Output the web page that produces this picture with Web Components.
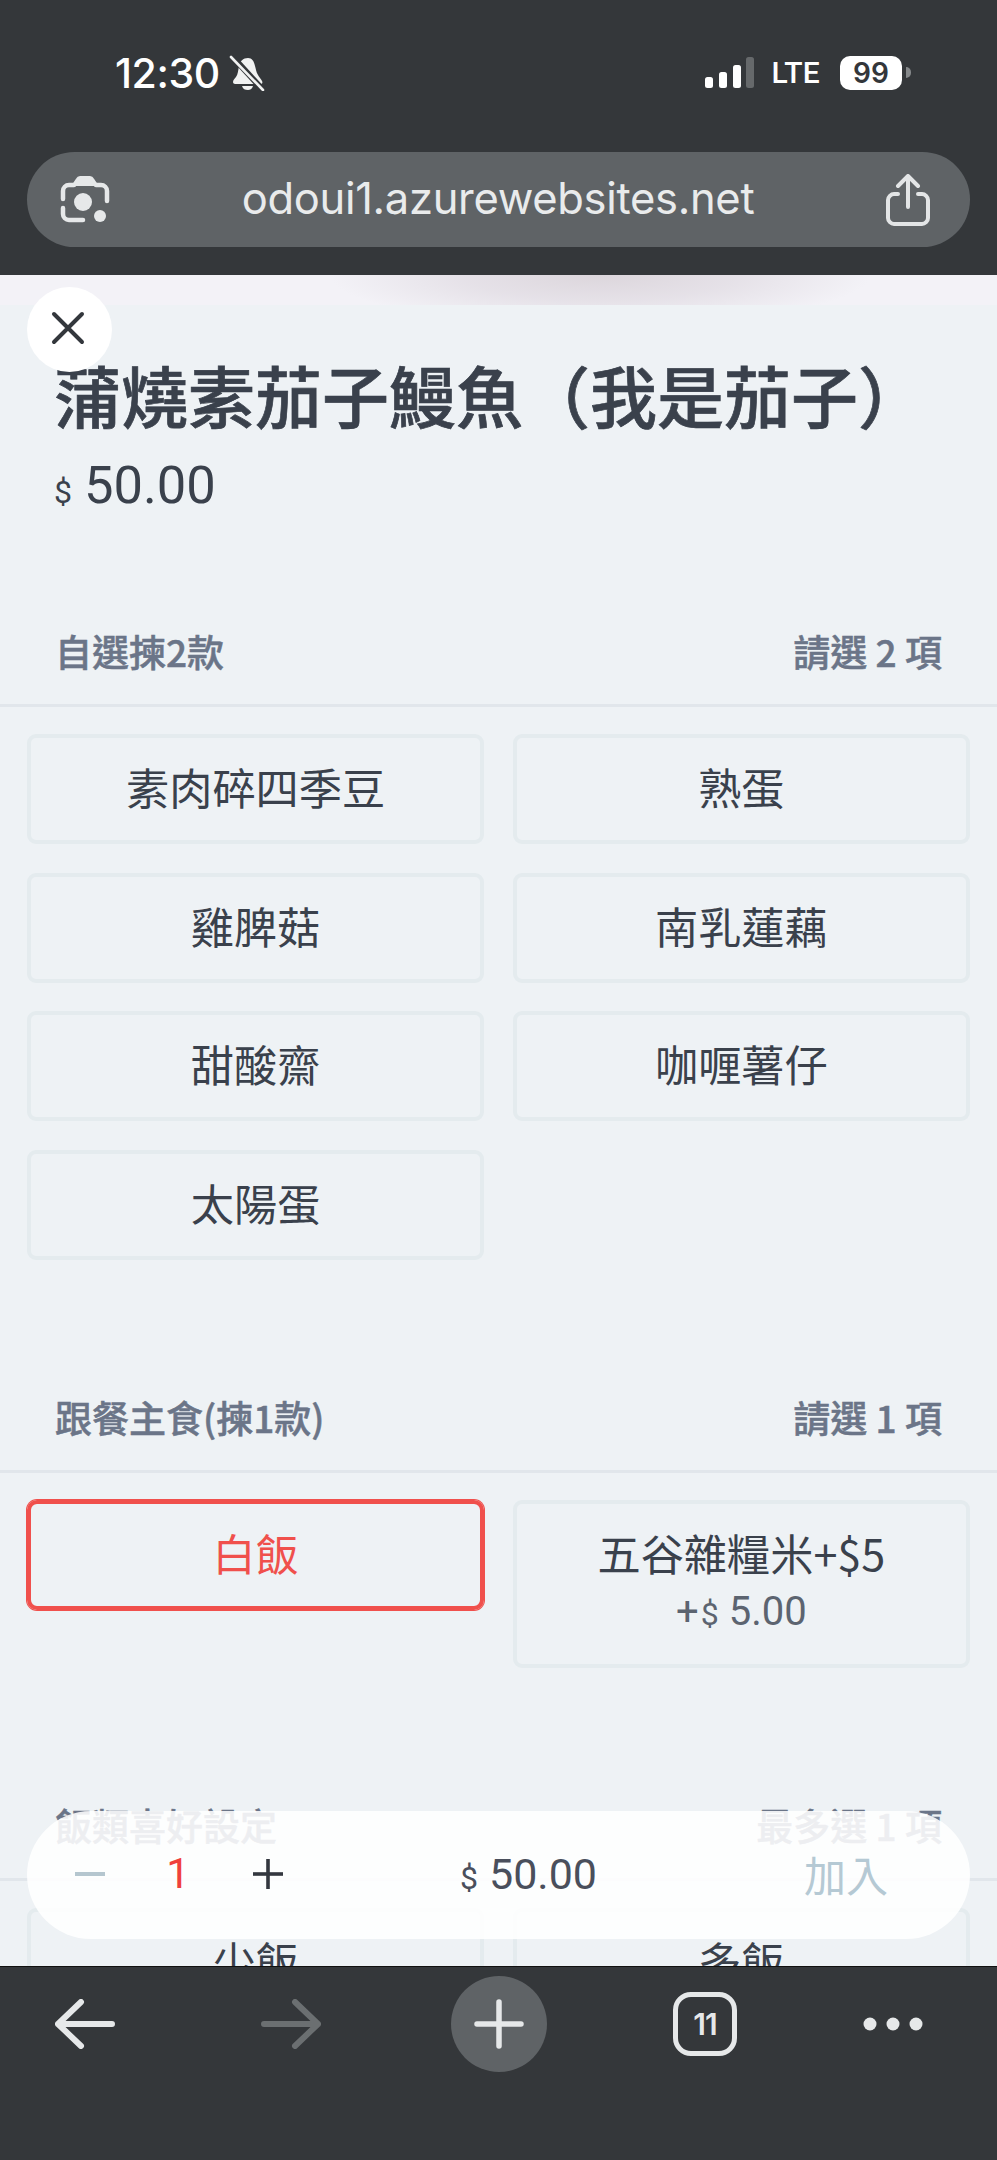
<!DOCTYPE html>
<html lang="zh-Hant">
<head>
<meta charset="utf-8">
<title>odoui1</title>
<style>
	html, body { margin: 0; padding: 0; height: 100%; background: #34373a; }
	body { font-family: "Noto Sans CJK TC", Roboto, sans-serif; }
	order-page { height: 2160px; }
</style>
</head>
<body>
<order-page>
	<status-bar slot="top"></status-bar>
	<url-bar slot="top">odoui1.azurewebsites.net</url-bar>

	<dish-head name="蒲燒素茄子鰻魚（我是茄子）" price="50.00"></dish-head>

	<option-group title="自選揀2款" rule="請選 2 項">
		<option-tile>素肉碎四季豆</option-tile>
		<option-tile>熟蛋</option-tile>
		<option-tile>雞脾菇</option-tile>
		<option-tile>南乳蓮藕</option-tile>
		<option-tile>甜酸齋</option-tile>
		<option-tile>咖喱薯仔</option-tile>
		<option-tile>太陽蛋</option-tile>
	</option-group>

	<option-group title="跟餐主食(揀1款)" rule="請選 1 項">
		<option-tile selected>白飯</option-tile>
		<option-tile extra="5.00">五谷雜糧米+$5</option-tile>
	</option-group>

	<option-group title="飯類喜好設定" rule="最多選 1 項">
		<option-tile>少飯</option-tile>
		<option-tile>多飯</option-tile>
	</option-group>

	<close-button slot="over"></close-button>
	<cart-bar slot="over" qty="1" total="50.00"></cart-bar>

	<browser-toolbar slot="bottom"></browser-toolbar>
</order-page>

<script>
class OrderPage extends HTMLElement {
	constructor() {
		super();
		this.attachShadow({ mode: 'open' });
		this.shadowRoot.innerHTML = `
			<style>
				:host { display: flex; flex-direction: column; width: 997px; overflow: hidden; background: #34373a; }
				.content { position: relative; flex: 1; min-height: 0; overflow: hidden; background: #eef2f5; }
				.strip {
					height: 30px;
					background:
						radial-gradient(ellipse 270px 52px at 600px 0, #dcd6dc 0%, rgba(226,221,228,.8) 50%, rgba(243,241,247,0) 100%),
						#f3f2f7;
				}
			</style>
			<slot name="top"></slot>
			<div class="content">
				<div class="strip"></div>
				<slot></slot>
				<slot name="over"></slot>
			</div>
			<slot name="bottom"></slot>
		`;
	}
}

class StatusBar extends HTMLElement {
	constructor() {
		super();
		this.attachShadow({ mode: 'open' });
		this.shadowRoot.innerHTML = `
			<style>
				:host { display: flex; align-items: center; height: 152px; box-sizing: border-box; padding: 0 86px 7px 115px; color: #fff; font-family: Inter, sans-serif; }
				.time { font-size: 41px; font-weight: 500; letter-spacing: -.4px; line-height: 44px; }
				.bell { margin-left: 9px; }
				.right { margin-left: auto; display: flex; align-items: center; }
				.lte { font-size: 30px; font-weight: 500; margin: 0 20px 0 17px; line-height: 34px; letter-spacing: .2px; font-family: Roboto, sans-serif; }
				.batt { width: 62px; height: 34px; border-radius: 10px; background: #fff; color: #33363a; font-size: 28px; font-weight: 600; text-align: center; line-height: 34px; }
				.cap { width: 5px; height: 11px; margin-left: 4px; background: #85888a; border-radius: 0 5px 5px 0; }
			</style>
			<span class="time">12:30</span>
			<svg class="bell" width="36" height="36" viewBox="0 0 36 36">
				<path fill="#f1f2f2" d="M19 3c-5 0-8 3-9 8-1 5-1 8-3 11-1 1-3 3-3 5 0 1 1 2 2 2h25c2 0 3-1 2-3-1-2-3-4-4-6-2-3-2-6-3-9-1-5-3-8-7-8zM13 31h11c-1 3-3 4-5 4-3 0-5-1-6-4z"/>
				<path stroke="#34373a" stroke-width="6" d="M2 0l32 35"/>
				<path stroke="#f1f2f2" stroke-width="2.6" stroke-linecap="round" d="M2 2l32 33"/>
			</svg>
			<div class="right">
				<svg width="50" height="31" viewBox="0 0 50 31">
					<rect x="0" y="20" width="8" height="11" rx="2.5" fill="#fff"/>
					<rect x="14" y="15" width="8" height="16" rx="2.5" fill="#fff"/>
					<rect x="28" y="8" width="8" height="23" rx="2.5" fill="#fff"/>
					<rect x="41" y="0" width="8" height="31" rx="2.5" fill="#66696b"/>
				</svg>
				<span class="lte">LTE</span>
				<span class="batt">99</span>
				<span class="cap"></span>
			</div>
		`;
	}
}

class UrlBar extends HTMLElement {
	constructor() {
		super();
		this.attachShadow({ mode: 'open' });
		this.shadowRoot.innerHTML = `
			<style>
				:host { display: block; height: 123px; box-sizing: border-box; padding: 0 27px 28px; }
				.pill { height: 95px; border-radius: 48px; background: #5f6366; display: flex; align-items: center; padding: 0 40px 0 33px; color: #e9ebec; }
				.text { flex: 1; text-align: center; font-family: Inter, sans-serif; font-size: 43.5px; font-weight: 400; letter-spacing: -.3px; line-height: 50px; padding-bottom: 4px; }
				svg { flex: none; display: block; }
			</style>
			<div class="pill">
				<svg width="50" height="50" viewBox="0 0 50 50" fill="none" stroke="#e6e8e9" stroke-width="4.5" stroke-linecap="round" stroke-linejoin="round">
					<path d="M3 24V16a6 6 0 0 1 6-6h5M36 10h5a6 6 0 0 1 6 6v10"/>
					<path fill="#e6e8e9" stroke-width="2" d="M13 10l4-6q1-2 3-2h10q2 0 3 2l4 6z"/>
					<path d="M3 33v6a6 6 0 0 0 6 6h14"/>
					<circle cx="23" cy="27" r="9" fill="#e6e8e9" stroke="none"/>
					<circle cx="40" cy="41" r="6" fill="#e6e8e9" stroke="none"/>
				</svg>
				<span class="text"><slot></slot></span>
				<svg width="44" height="52" viewBox="0 0 44 52" fill="none" stroke="#e3e5e6" stroke-width="4" stroke-linecap="round" stroke-linejoin="round">
					<path d="M12 20H8c-3 0-6 3-6 6v18c0 3 3 6 6 6h28c3 0 6-3 6-6V26c0-3-3-6-6-6h-4"/>
					<path d="M22 33V3M12 12l10-10 10 10"/>
				</svg>
			</div>
		`;
	}
}

class CloseButton extends HTMLElement {
	constructor() {
		super();
		this.attachShadow({ mode: 'open' });
		this.shadowRoot.innerHTML = `
			<style>
				:host { position: absolute; left: 27px; top: 12px; box-sizing: border-box; width: 85px; height: 85px; padding: 0 3px 3px 0; border-radius: 50%; background: #fff; display: flex; align-items: center; justify-content: center; }
			</style>
			<svg width="34" height="34" viewBox="0 0 34 34" stroke="#33373c" stroke-width="4" stroke-linecap="round">
				<path d="M3 3l28 28M31 3L3 31"/>
			</svg>
		`;
	}
}

class DishHead extends HTMLElement {
	constructor() {
		super();
		this.attachShadow({ mode: 'open' });
		const name = this.getAttribute('name');
		const price = this.getAttribute('price');
		this.shadowRoot.innerHTML = `
			<style>
				:host { display: block; padding: 49px 40px 0 54px; color: #3a414c; }
				h1 { margin: 0; font-size: 67px; line-height: 80px; font-weight: 500; -webkit-text-stroke: .7px #3a414c; white-space: nowrap; }
				.price { margin-top: 21px; height: 60px; line-height: 60px; font-family: Roboto, sans-serif; font-size: 52.5px; white-space: nowrap; }
				.cur { font-size: 32px; margin-right: 12px; }
			</style>
			<h1>${name}</h1>
			<div class="price"><span class="cur">$</span>${price}</div>
		`;
	}
}

class OptionGroup extends HTMLElement {
	constructor() {
		super();
		this.attachShadow({ mode: 'open' });
		this.shadowRoot.innerHTML = `
			<style>
				:host { display: block; margin-top: 134px; }
				:host(:first-of-type) { margin-top: 113px; }
				.head { display: flex; justify-content: space-between; padding: 0 55px 30px; line-height: 46px; font-size: 37px; font-weight: 500; -webkit-text-stroke: .5px #6b7588; color: #6b7588; border-bottom: 3px solid #e1e6eb; white-space: nowrap; }
				.grid { display: grid; grid-template-columns: 1fr 1fr; gap: 28.5px; align-items: start; padding: 27px 27px 0; }
			</style>
			<div class="head"><span>${this.getAttribute('title')}</span><span>${this.getAttribute('rule')}</span></div>
			<div class="grid"><slot></slot></div>
		`;
	}
}

class OptionTile extends HTMLElement {
	constructor() {
		super();
		this.attachShadow({ mode: 'open' });
		const extra = this.getAttribute('extra');
		this.shadowRoot.innerHTML = `
			<style>
				:host { display: block; box-sizing: border-box; padding: 18px 8px 24px; border: 4px solid #e4ebee; border-radius: 9px; text-align: center; font-size: 43.2px; line-height: 60px; color: #3a414c; }
				:host([selected]) { border-color: #f0504c; color: #f0504c; box-shadow: 0 0 0 1px #f0504c; border-radius: 10px; }
				.extra { font-family: Roboto, sans-serif; font-size: 40px; line-height: 56px; padding-top: 2px; margin-bottom: -2px; color: #5c6470; }
				.cur { font-size: 32px; margin: 0 10px 0 2px; }
			</style>
			<slot></slot>
			${extra ? `<div class="extra">+<span class="cur">$</span>${extra}</div>` : ''}
		`;
	}
}

class CartBar extends HTMLElement {
	constructor() {
		super();
		this.attachShadow({ mode: 'open' });
		this.shadowRoot.innerHTML = `
			<style>
				:host { position: absolute; left: 27px; right: 27px; top: 1536px; box-sizing: border-box; height: 128px; border-radius: 64px; background: rgba(255,255,255,.88); display: flex; align-items: center; padding: 0 82px 3px 48px; font-family: Roboto, sans-serif; }
				.stepper { display: flex; align-items: center; width: 208px; flex: none; }
				.qty { width: 30px; margin-left: 58px; text-align: center; font-size: 42px; color: #f0403c; }
				svg { flex: none; display: block; }
				.plus { margin-left: 60px; }
				.total { flex: 1; text-align: center; font-size: 43px; color: #4a4f5c; padding-right: 30px; white-space: nowrap; }
				.cur { font-size: 32px; margin-right: 11px; }
				.add { font-family: "Noto Sans CJK TC", sans-serif; font-size: 42px; color: #b5c9d4; }
			</style>
			<div class="stepper">
				<svg width="30" height="6" viewBox="0 0 30 6"><rect width="30" height="4" y="1" fill="#b5c6cf"/></svg>
				<span class="qty">${this.getAttribute('qty')}</span>
				<svg class="plus" width="30" height="30" viewBox="0 0 30 30" fill="#33373f"><rect y="13.2" width="30" height="3.6"/><rect x="13.2" width="3.6" height="30"/></svg>
			</div>
			<span class="total"><span class="cur">$</span>${this.getAttribute('total')}</span>
			<span class="add">加入</span>
		`;
	}
}

class BrowserToolbar extends HTMLElement {
	constructor() {
		super();
		this.attachShadow({ mode: 'open' });
		this.shadowRoot.innerHTML = `
			<style>
				:host { display: flex; align-items: flex-start; height: 194px; box-sizing: border-box; padding: 9px 0 0 55px; background: #34373a; border-top: 1px solid #111; }
				.cell { height: 96px; display: flex; align-items: center; }
				.fwd { margin-left: 146px; }
				.add { margin-left: 130px; width: 96px; justify-content: center; border-radius: 50%; background: #5f6366; }
				.tab-cell { margin-left: 126px; }
				.more { margin-left: 126px; }
				.tabs { box-sizing: border-box; width: 64px; height: 64px; border: 5px solid #e6e8e9; border-radius: 18px; color: #e6e8e9; display: flex; align-items: center; justify-content: center; font: 600 30px Inter, sans-serif; letter-spacing: -1px; }
				svg { display: block; }
			</style>
			<div class="cell">
				<svg width="60" height="50" viewBox="0 0 60 50" fill="none" stroke="#e6e8e9" stroke-width="6" stroke-linecap="round" stroke-linejoin="round"><path d="M57 25H3M26 3L3 25l23 22"/></svg>
			</div>
			<div class="cell fwd">
				<svg width="60" height="50" viewBox="0 0 60 50" fill="none" stroke="#6b6f71" stroke-width="6" stroke-linecap="round" stroke-linejoin="round"><path d="M3 25h54M34 3l23 22-23 22"/></svg>
			</div>
			<div class="cell add">
				<svg width="50" height="50" viewBox="0 0 50 50" stroke="#e6e8e9" stroke-width="5.5" stroke-linecap="round"><path d="M3 25h44M25 3v44"/></svg>
			</div>
			<div class="cell tab-cell"><div class="tabs">11</div></div>
			<div class="cell more">
				<svg width="60" height="14" viewBox="0 0 60 14" fill="#e6e8e9"><circle cx="7" cy="7" r="6.5"/><circle cx="30" cy="7" r="6.5"/><circle cx="53" cy="7" r="6.5"/></svg>
			</div>
		`;
	}
}

customElements.define('order-page', OrderPage);
customElements.define('status-bar', StatusBar);
customElements.define('url-bar', UrlBar);
customElements.define('close-button', CloseButton);
customElements.define('dish-head', DishHead);
customElements.define('option-group', OptionGroup);
customElements.define('option-tile', OptionTile);
customElements.define('cart-bar', CartBar);
customElements.define('browser-toolbar', BrowserToolbar);
</script>
</body>
</html>
